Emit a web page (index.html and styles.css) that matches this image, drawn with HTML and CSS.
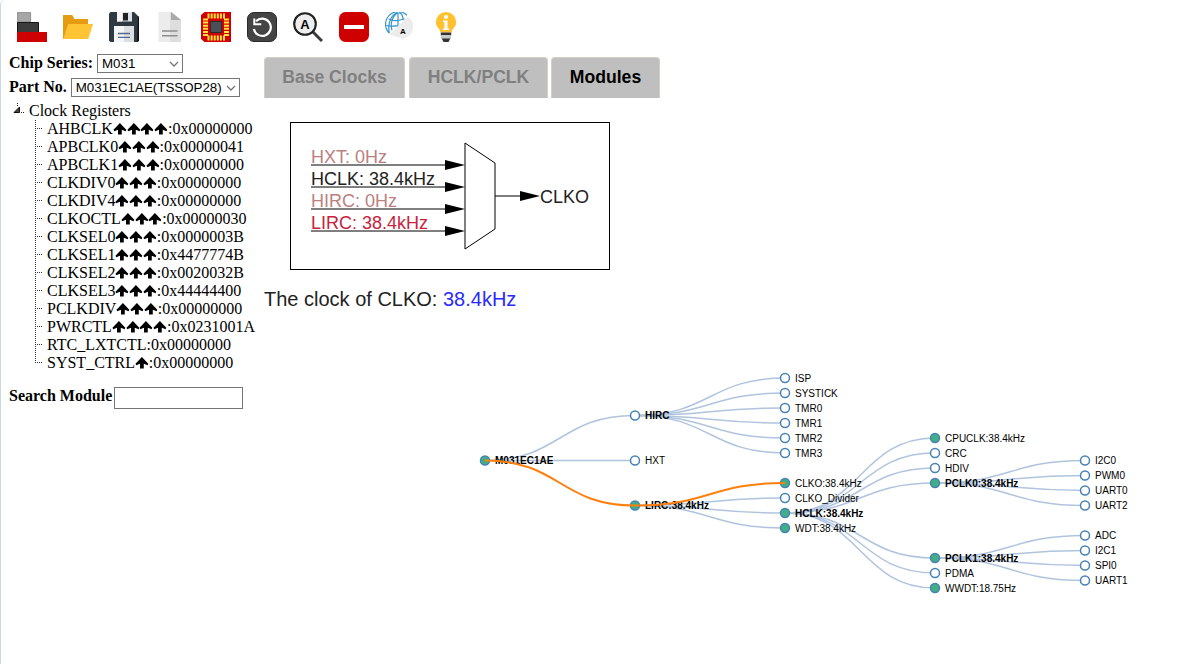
FILE: index.html
```html
<!DOCTYPE html>
<html lang="en">
<head>
<meta charset="utf-8">
<title>Clock Configure</title>
<link rel="stylesheet" href="styles.css">
</head>
<body>
<svg class="defs" width="0" height="0"><defs>
<symbol id="up" viewBox="0 0 14 12"><path d="M7 0 13.500 6.800 12.800 8.200 8.900 6.700V11.600H5.100V6.700L1.200 8.200.5 6.800Z"/></symbol>
</defs></svg>
<div class="app">
<header class="toolbar">
<svg class="icon" viewBox="0 0 30 30"><path fill="#a6a6a6" stroke="#777" stroke-width=".7" d="M.4.4h13.2v9.5H.4z"/><path fill="#3c3c3c" stroke="#151515" stroke-width="1" d="M.5 10.5h21v10H.5z"/><path fill="#cf0000" d="M0 20h30v10H0z"/></svg>
<svg class="icon" viewBox="0 0 30 30"><path fill="#e59c12" d="M0 3h9.2l2.3 4H25v13L1 27H0z"/><path fill="#ffc433" d="M5.2 12H30l-4.7 15H.3z"/></svg>
<svg class="icon" viewBox="0 0 30 30"><path fill="#2e3942" d="M1.5 0H25l5 5v23.5L28.5 30h-27L0 28.500V1.500z"/><path fill="#111" d="M29 4l1 1v23.500L28.500 30H28z"/><path fill="#dfe3e7" d="M8 0h15v9.500H8z"/><path fill="#f5f5f5" d="M8 0h5v9.500H8z"/><path fill="#222" d="M14 1h5v7.500h-5z"/><path fill="#f4f5f6" d="M5 14h10v16H5z"/><path fill="#dcdfe2" d="M15 14h10v16H15z"/><path stroke="#52698c" stroke-width="1.300" d="M9 21.500h12M9 25.300h12"/></svg>
<svg class="icon" viewBox="0 0 30 30"><path fill="#ececec" d="M3.500 0h13l9.500 8v22H3.500z"/><path fill="#dedede" d="M15 0h1.500L26 8v22H15z"/><path fill="#aaa" d="M16 0l10 8H16z"/><path stroke="#8d8d8d" stroke-width="1.500" d="M7 19h15.500M7 23.700h15.500"/></svg>
<svg class="icon" viewBox="0 0 30 30"><path fill="#cf0000" d="M3.500 0H30v30H3.500L0 27V3z"/><path stroke="#ffe23d" stroke-width="5" stroke-dasharray="2 1.100" d="M6.500 4h18M6.500 26h18M4.500 6.500v18M25.500 6.500v18"/><path fill="#cf0000" d="M8 8h14v14H8z"/><rect x="9.500" y="9.500" width="11" height="11" fill="#494f54" stroke="#292d30"/></svg>
<svg class="icon" viewBox="0 0 30 30"><rect x=".5" y=".5" width="29" height="29" rx="6.500" fill="#444" stroke="#292929"/><path fill="none" stroke="#fff" stroke-width="2.200" d="M9 9.300A8.600 8.600 0 1 1 6.800 17"/><path fill="none" stroke="#fff" stroke-width="2" d="M7.300 6.500v5.700h7"/></svg>
<svg class="icon" viewBox="0 0 30 30"><path stroke="#3c3c3c" stroke-width="3" d="M19.500 19.500l9.500 9.500"/><circle cx="12" cy="12" r="10.800" fill="#ededed" stroke="#202020" stroke-width="2.100"/><text x="12" y="16.500" class="lens">A</text></svg>
<svg class="icon" viewBox="0 0 30 30"><rect width="30" height="30" rx="6.500" fill="#cf0000"/><path fill="#fff" d="M5 13h20v4H5z"/></svg>
<svg class="icon" viewBox="0 0 30 30"><path fill="#ececec" d="M22.500 4.500A12 12 0 0 1 18.500 26.500l-1.500 2-1-2.200L4.500 22.500z"/><path fill="#fff" d="M22 3A11 11 0 0 0 4 22z"/><g fill="none" stroke="#3695c9" stroke-width="1.200"><path d="M22 3.300A11 11 0 1 0 4.300 21.200M3.500 7c5 2 11 2 16-.2M1.500 13.500c4 1 8 .8 11.500.2M13 .7C7 4 5 12 7 18.300M12 .7C8 2 2 9 4.300 21M13 .7V13.500M14 .7c3 .8 4 4 4 7.300"/></g><text x="18" y="21.500" class="globe-letter">A</text></svg>
<svg class="icon" viewBox="0 0 30 30"><path fill="#ffc12f" d="M15 0a10.200 10.200 0 0 1 10.200 10.200c0 4.800-4.200 6-4.700 10.300h-11C9 16.200 4.800 15 4.800 10.200A10.200 10.200 0 0 1 15 0z"/><circle cx="15" cy="5" r="2" fill="#fff"/><path fill="#fff" d="M12 8.500h4.500v8H18V18h-6v-1.500h1.400V10H12z"/><path fill="#333" d="M9.800 20.500h10.400v3H9.800zM10.500 26h9l-2 4h-5z"/><path fill="#c9c9c9" d="M9.800 23h10.400v3.500H9.800z"/></svg>
</header>
<div class="content">
<aside class="sidebar">
<div class="field"><b>Chip Series:</b><span class="select series">M031<svg width="10" height="6"><path d="M1 1l4 4 4-4"/></svg></span></div>
<div class="field"><b>Part No.</b><span class="select part">M031EC1AE(TSSOP28)<svg width="10" height="6"><path d="M1 1l4 4 4-4"/></svg></span></div>
<div class="registers">
<div class="root"><svg width="20" height="18"><path d="M8.500 1v4M12 10.500h4" stroke="#222" stroke-dasharray="1 1"/><path d="M5 10.500 10.500 5v5.500z" fill="#444" stroke="#111"/></svg>Clock Registers</div>
<ul>
<li>AHBCLK<svg class="up"><use href="#up"/></svg><svg class="up"><use href="#up"/></svg><svg class="up"><use href="#up"/></svg><svg class="up"><use href="#up"/></svg>:0x00000000</li>
<li>APBCLK0<svg class="up"><use href="#up"/></svg><svg class="up"><use href="#up"/></svg><svg class="up"><use href="#up"/></svg>:0x00000041</li>
<li>APBCLK1<svg class="up"><use href="#up"/></svg><svg class="up"><use href="#up"/></svg><svg class="up"><use href="#up"/></svg>:0x00000000</li>
<li>CLKDIV0<svg class="up"><use href="#up"/></svg><svg class="up"><use href="#up"/></svg><svg class="up"><use href="#up"/></svg>:0x00000000</li>
<li>CLKDIV4<svg class="up"><use href="#up"/></svg><svg class="up"><use href="#up"/></svg><svg class="up"><use href="#up"/></svg>:0x00000000</li>
<li>CLKOCTL<svg class="up"><use href="#up"/></svg><svg class="up"><use href="#up"/></svg><svg class="up"><use href="#up"/></svg>:0x00000030</li>
<li>CLKSEL0<svg class="up"><use href="#up"/></svg><svg class="up"><use href="#up"/></svg><svg class="up"><use href="#up"/></svg>:0x0000003B</li>
<li>CLKSEL1<svg class="up"><use href="#up"/></svg><svg class="up"><use href="#up"/></svg><svg class="up"><use href="#up"/></svg>:0x4477774B</li>
<li>CLKSEL2<svg class="up"><use href="#up"/></svg><svg class="up"><use href="#up"/></svg><svg class="up"><use href="#up"/></svg>:0x0020032B</li>
<li>CLKSEL3<svg class="up"><use href="#up"/></svg><svg class="up"><use href="#up"/></svg><svg class="up"><use href="#up"/></svg>:0x44444400</li>
<li>PCLKDIV<svg class="up"><use href="#up"/></svg><svg class="up"><use href="#up"/></svg><svg class="up"><use href="#up"/></svg>:0x00000000</li>
<li>PWRCTL<svg class="up"><use href="#up"/></svg><svg class="up"><use href="#up"/></svg><svg class="up"><use href="#up"/></svg><svg class="up"><use href="#up"/></svg>:0x0231001A</li>
<li>RTC_LXTCTL:0x00000000</li>
<li>SYST_CTRL<svg class="up"><use href="#up"/></svg>:0x00000000</li>
</ul>
</div>
<div class="search"><b>Search Module</b><input type="text" aria-label="Search Module"></div>
</aside>
<main class="main">
<nav class="tabs"><div class="tab base">Base Clocks</div><div class="tab hclk">HCLK/PCLK</div><div class="tab modules">Modules</div></nav>
<svg class="mux" width="320" height="148" viewBox="290 122 320 148">
<rect x="290.500" y="122.500" width="319" height="147" fill="none" stroke="#000"/>
<path d="M311 165H446M311 187H446M311 209H446M311 231H446M495 196H521M465 143L495 163V229L465 249Z" fill="none" stroke="#000"/>
<path d="M445 160l20 5-20 5zM445 182l20 5-20 5zM445 204l20 5-20 5zM445 226l20 5-20 5zM520 191l20 5-20 5z"/>
<text x="311" y="163" fill="#bc8080">HXT: 0Hz</text>
<text x="311" y="185" fill="#222">HCLK: 38.4kHz</text>
<text x="311" y="207" fill="#bc8080">HIRC: 0Hz</text>
<text x="311" y="229" fill="#c8233c">LIRC: 38.4kHz</text>
<text x="540" y="203" fill="#222">CLKO</text>
</svg>
<p class="result">The clock of CLKO: <span>38.4kHz</span></p>
<svg class="tree" id="tree" width="931" height="304" viewBox="264 340 931 304"></svg>
</main>
</div>
</div>
<script src="tree.js"></script>
</body>
</html>
```
FILE: tree.js
```js
// [name, y, enabled, children, selected]
const data = ['M031EC1AE', 460.5, 1, [
  ['HIRC', 415.5, 0, [
    ['ISP', 378, 0], ['SYSTICK', 393, 0], ['TMR0', 408, 0],
    ['TMR1', 423, 0], ['TMR2', 438, 0], ['TMR3', 453, 0]
  ]],
  ['HXT', 460.5, 0],
  ['LIRC:38.4kHz', 505.5, 1, [
    ['CLKO:38.4kHz', 483, 1, null, true],
    ['CLKO_Divider', 498, 0],
    ['HCLK:38.4kHz', 513, 1, [
      ['CPUCLK:38.4kHz', 438, 1], ['CRC', 453, 0], ['HDIV', 468, 0],
      ['PCLK0:38.4kHz', 483, 1, [
        ['I2C0', 460.5, 0], ['PWM0', 475.5, 0], ['UART0', 490.5, 0], ['UART2', 505.5, 0]
      ]],
      ['PCLK1:38.4kHz', 558, 1, [
        ['ADC', 535.5, 0], ['I2C1', 550.5, 0], ['SPI0', 565.5, 0], ['UART1', 580.5, 0]
      ]],
      ['PDMA', 573, 0], ['WWDT:18.75Hz', 588, 1]
    ]],
    ['WDT:38.4kHz', 528, 1]
  ], true]
]];
const links = [], nodes = [], active = [];
function walk([name, y, on, children], x) {
  nodes.push(`<circle class="${on ? 'on' : 'off'}" cx="${x}" cy="${y}" r="4.500"/><text class="${children ? 'branch' : 'leaf'}" x="${x + 10}" y="${y + 3.5}">${name}</text>`);
  (children || []).forEach(child => {
    const m = x + 75;
    const path = `<path class="${child[4] ? 'active' : 'link'}" d="M${x},${y}C${m},${y} ${m},${child[1]} ${x + 150},${child[1]}"/>`;
    (child[4] ? active : links).push(path);
    walk(child, x + 150);
  });
}
walk(data, 485);
document.getElementById('tree').innerHTML = links.join('') + nodes.join('') + active.join('');
```
FILE: styles.css
```css
* { box-sizing: border-box; }
body { margin: 0; background: #fff; color: #000; font: 16px/18px "Liberation Serif", serif; overflow: hidden; }
.defs { display: block; }
.app { height: 664px; border-left: 1px solid #ccd8e6; border-top-left-radius: 5px; }
.toolbar { display: flex; gap: 16px; padding: 12px 0 0 16px; height: 50px; }
.icon { width: 30px; height: 30px; flex: none; }
.lens { font: bold 13px "Liberation Sans", sans-serif; text-anchor: middle; }
.globe-letter { font: bold 8px "Liberation Sans", sans-serif; text-anchor: middle; }
.content { display: flex; }
.sidebar { width: 263px; padding: 4px 0 0 8px; flex: none; }
.field { display: flex; gap: 4px; height: 24px; white-space: nowrap; }
.select { display: flex; align-items: center; justify-content: space-between; height: 19px; border: 1px solid #767676; padding: 0 3px 0 4px; font: 13.333px "Liberation Sans", sans-serif; }
.select svg { fill: none; stroke: #767676; stroke-width: 1.300; }
.series { width: 86px; }
.part { width: 169px; }
.root { display: flex; height: 18px; }
.root svg { flex: none; }
.registers ul { list-style: none; margin: 0 0 0 26px; padding: 0; background: repeating-linear-gradient(#333 0 1px, transparent 1px 2px) 0 0 / 1px 243px no-repeat; }
.registers li { height: 18px; padding-left: 12px; white-space: nowrap; background: repeating-linear-gradient(90deg, #333 0 1px, transparent 1px 2px) 0 8px / 7px 1px no-repeat; }
.up { width: 13.8px; height: 12px; vertical-align: -1px; }
.search { display: flex; gap: 2px; margin-top: 15px; white-space: nowrap; }
.search input { width: 129px; height: 22px; border: 1px solid #767676; padding: 0; }
.main { flex: 1; min-width: 0; padding-top: 7px; font-family: "Liberation Sans", sans-serif; }
.tabs { display: flex; }
.tab { height: 41px; border: 1px solid #d3d0c5; border-bottom: 0; border-radius: 4px 4px 0 0; background: #bfbfbf; color: #808080; font-weight: bold; font-size: 17.6px; line-height: 38px; text-align: center; }
.base { width: 141px; margin-right: 4px; }
.hclk { width: 139px; margin-right: 3px; }
.modules { width: 109px; color: #000; }
.mux { display: block; margin: 24px 0 0 26px; font-size: 18px; }
.result { margin: 17px 0 0; font-size: 20px; line-height: 24px; color: #222; }
.result span { color: #2a2aff; }
.tree { display: block; margin-top: 29px; font-size: 10px; }
.tree circle { stroke: steelblue; stroke-width: 1.500; }
.tree .on { fill: #41ae88; }
.tree .off { fill: #fff; }
.tree .branch { font-weight: bold; }
.tree .link { fill: none; stroke: #b0c4de; stroke-width: 1.500; }
.tree .active { fill: none; stroke: #ff7f0e; stroke-width: 2; }
```
